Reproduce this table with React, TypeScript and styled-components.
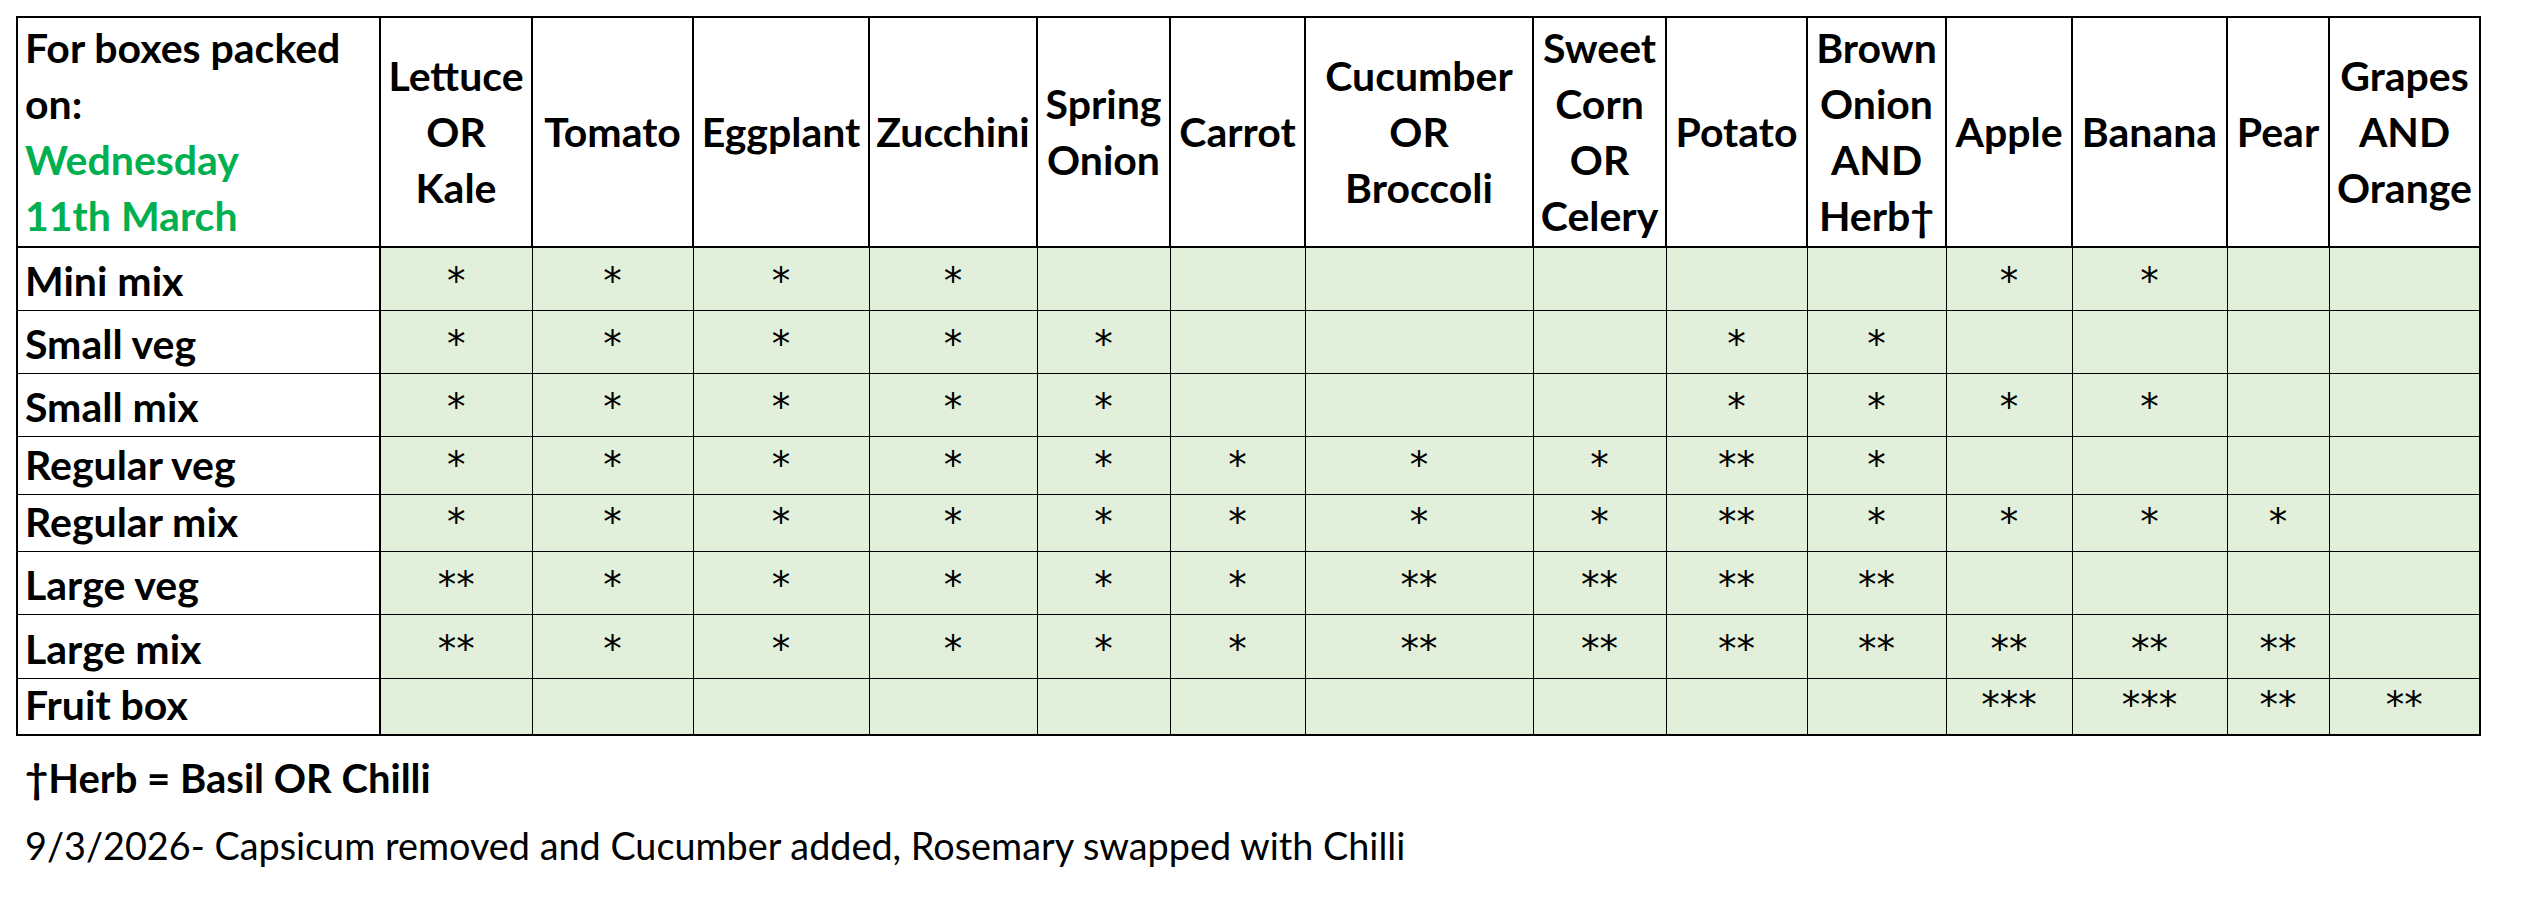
import React from "react"
import styled, { createGlobalStyle } from "styled-components"

const GlobalStyle = createGlobalStyle`
  body {
    margin: 0;
    background: #ffffff;
    font-family: Lato, "Open Sans", sans-serif;
    color: #000000;
  }
`

const green = "#00b050"
const fill = "#e2efda"

type Mark = "" | "*" | "**" | "***"

interface Column {
  lines: string[]
  width: number
}

interface BoxRow {
  name: string
  height: number
  marks: Mark[]
}

const labelWidth = 363

const columns: Column[] = [
  { lines: ["Lettuce", "OR", "Kale"], width: 152 },
  { lines: ["Tomato"], width: 161 },
  { lines: ["Eggplant"], width: 176 },
  { lines: ["Zucchini"], width: 168 },
  { lines: ["Spring", "Onion"], width: 133 },
  { lines: ["Carrot"], width: 135 },
  { lines: ["Cucumber", "OR", "Broccoli"], width: 228 },
  { lines: ["Sweet", "Corn", "OR", "Celery"], width: 133 },
  { lines: ["Potato"], width: 141 },
  { lines: ["Brown", "Onion", "AND", "Herb†"], width: 139 },
  { lines: ["Apple"], width: 126 },
  { lines: ["Banana"], width: 155 },
  { lines: ["Pear"], width: 102 },
  { lines: ["Grapes", "AND", "Orange"], width: 151 },
]

const rows: BoxRow[] = [
  { name: "Mini mix", height: 63, marks: ["*", "*", "*", "*", "", "", "", "", "", "", "*", "*", "", ""] },
  { name: "Small veg", height: 63, marks: ["*", "*", "*", "*", "*", "", "", "", "*", "*", "", "", "", ""] },
  { name: "Small mix", height: 63, marks: ["*", "*", "*", "*", "*", "", "", "", "*", "*", "*", "*", "", ""] },
  { name: "Regular veg", height: 58, marks: ["*", "*", "*", "*", "*", "*", "*", "*", "**", "*", "", "", "", ""] },
  { name: "Regular mix", height: 57, marks: ["*", "*", "*", "*", "*", "*", "*", "*", "**", "*", "*", "*", "*", ""] },
  { name: "Large veg", height: 63, marks: ["**", "*", "*", "*", "*", "*", "**", "**", "**", "**", "", "", "", ""] },
  { name: "Large mix", height: 64, marks: ["**", "*", "*", "*", "*", "*", "**", "**", "**", "**", "**", "**", "**", ""] },
  { name: "Fruit box", height: 57, marks: ["", "", "", "", "", "", "", "", "", "", "***", "***", "**", "**"] },
]

const Page = styled.div`
  padding: 16px 0 0 16px;
`

const Sheet = styled.table`
  border-collapse: collapse;
  table-layout: fixed;
  width: 2463px;
  border: 2px solid #000;
`

const Col = styled.col<{ $w: number }>`
  width: ${p => p.$w}px;
`

const Row = styled.tr<{ $h: number }>`
  height: ${p => p.$h}px;
`

const Corner = styled.th`
  text-align: left;
  vertical-align: middle;
  padding: 0 0 1px 7px;
  font-size: 41px;
  font-weight: 700;
  line-height: 56px;
  white-space: nowrap;
  border: 2px solid #000;
`

const Green = styled.span`
  color: ${green};
`

const ProduceHead = styled.th`
  text-align: center;
  vertical-align: middle;
  padding: 0;
  font-size: 41px;
  font-weight: 700;
  line-height: 56px;
  white-space: nowrap;
  border: 2px solid #000;
`

const RowLabel = styled.th`
  text-align: left;
  vertical-align: bottom;
  padding: 0 0 6px 7px;
  font-size: 41px;
  font-weight: 700;
  line-height: 46px;
  white-space: nowrap;
  border: 1px solid #000;
  border-left: 2px solid #000;
  border-right: 2px solid #000;
`

const MarkCell = styled.td`
  background: ${fill};
  text-align: center;
  vertical-align: bottom;
  padding: 0 0 5px 0;
  font-family: "DejaVu Sans", sans-serif;
  font-size: 37px;
  line-height: 46px;
  border: 1px solid #000;
`

const Notes = styled.div`
  padding: 19px 0 0 9px;
  display: flex;
  flex-direction: column;
  gap: 22px;
`

const HerbNote = styled.div`
  font-size: 40px;
  font-weight: 700;
  line-height: 46px;
`

const ChangeNote = styled.div`
  font-size: 37.8px;
  font-weight: 400;
  line-height: 46px;
`

export default function App() {
  return (
    <Page>
      <GlobalStyle />
      <Sheet>
        <colgroup>
          <Col $w={labelWidth} />
          {columns.map((c, i) => (
            <Col key={i} $w={c.width} />
          ))}
        </colgroup>
        <thead>
          <Row $h={230}>
            <Corner>
              For boxes packed
              <br />
              on:
              <br />
              <Green>Wednesday</Green>
              <br />
              <Green>11th March</Green>
            </Corner>
            {columns.map((c, i) => (
              <ProduceHead key={i}>
                {c.lines.map((l, j) => (
                  <React.Fragment key={j}>
                    {j > 0 && <br />}
                    {l}
                  </React.Fragment>
                ))}
              </ProduceHead>
            ))}
          </Row>
        </thead>
        <tbody>
          {rows.map(r => (
            <Row key={r.name} $h={r.height}>
              <RowLabel>{r.name}</RowLabel>
              {r.marks.map((m, i) => (
                <MarkCell key={i}>{m}</MarkCell>
              ))}
            </Row>
          ))}
        </tbody>
      </Sheet>
      <Notes>
        <HerbNote>†Herb = Basil OR Chilli</HerbNote>
        <ChangeNote>
          9/3/2026- Capsicum removed and Cucumber added, Rosemary swapped with Chilli
        </ChangeNote>
      </Notes>
    </Page>
  )
}
